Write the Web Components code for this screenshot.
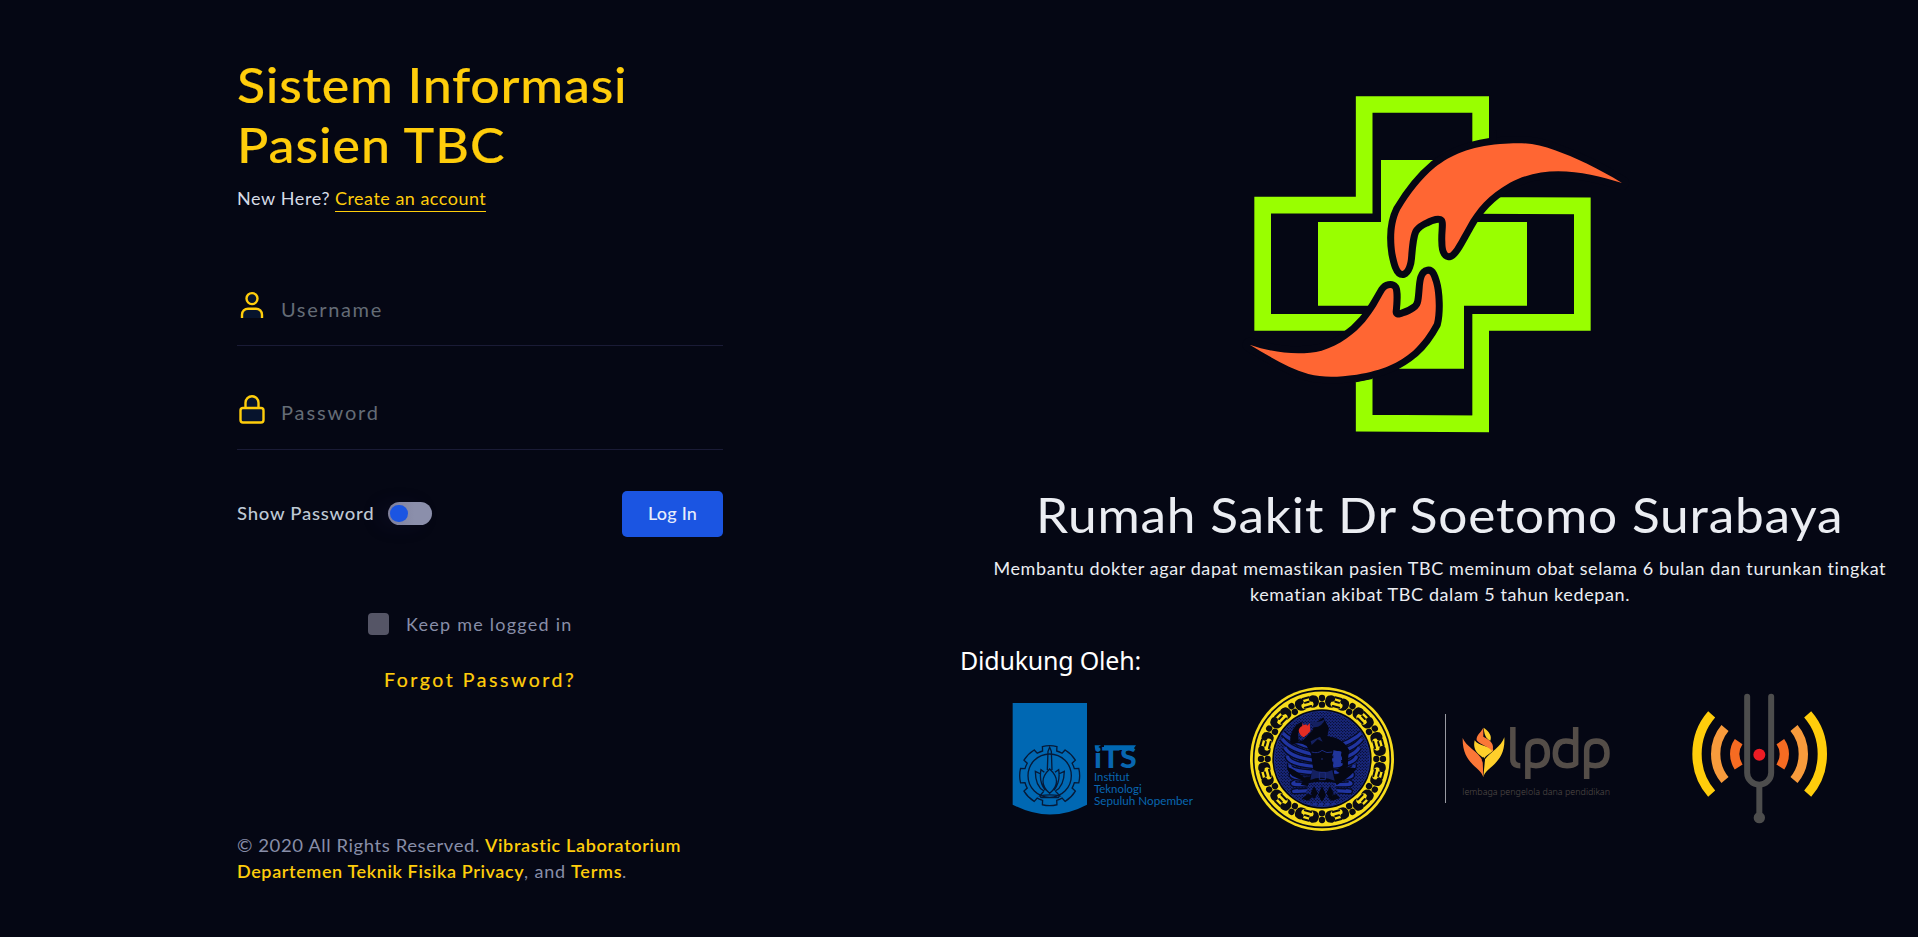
<!DOCTYPE html>
<html lang="id"><head><meta charset="utf-8"><title>Sistem Informasi Pasien TBC</title>
<style>html,body{margin:0;height:100%;background:#050714;overflow:hidden}</style></head>
<body><login-page></login-page>
<script>
const define=(name,html,after)=>customElements.define(name,class extends HTMLElement{
  connectedCallback(){
    if(!this.shadowRoot){
      const t=document.createElement('template');
      t.innerHTML=typeof html==='function'?html(this):html;
      this.attachShadow({mode:'open'}).append(t.content.cloneNode(true));
    }
    if(after)after(this);
  }});

/* A run of text set to the width in its "w" attribute: glyphs are widened by "x", the rest is tracking. */
define('tracked-text','<style>:host{display:inline-block;white-space:pre}span{display:inline-block;transform-origin:0 50%}</style><span><slot></slot></span>',el=>{
  const s=el.shadowRoot.querySelector('span'),n=el.textContent.length,w=+el.getAttribute('w'),x=+(el.getAttribute('x')||1);
  s.style.letterSpacing='0px';
  const d=(w/x-s.getBoundingClientRect().width)/(n-.5);
  s.style.letterSpacing=d.toFixed(4)+'px';
  if(x!==1)s.style.transform=`scaleX(${x})`;
  el.style.width=w+'px';
});

define('field-row',el=>{const lock=el.hasAttribute('lock');return `<style>
:host{display:block;height:103px}
.row{display:flex;height:${lock?'103px':'102px'};border-bottom:1px solid #1a1b36;box-sizing:content-box}
svg{margin:${lock?'46px':'47px'} 14px 0 0;width:30px;height:34px;flex:none}
.ph{margin-top:51px;font-size:20px;line-height:30px;height:30px;color:#646c76;font-weight:400}
</style><div class="row">${lock
?'<svg viewBox="0 0 30 34" fill="#07142d" stroke="#ffcd0b" stroke-width="2.4"><path d="M8.500 17V10.700a6.500 6.500 0 0 1 13 0V17"/><rect x="3.500" y="16" width="23" height="14.500" rx="2.500"/></svg>'
:'<svg viewBox="0 0 30 34" fill="#07142d" stroke="#ffcd0b" stroke-width="2.4"><circle cx="15" cy="8.600" r="5.500"/><path d="M5 28V24.700a6 6 0 0 1 6-6h8a6 6 0 0 1 6 6V28"/></svg>'}
<div class="ph"><slot></slot></div></div>`});

define('toggle-switch',`<style>:host{display:block;width:44px;height:23px;border-radius:12px;background:linear-gradient(90deg,#7f7f9b,#8b8fab 60%);box-shadow:-10px 2px 18px rgba(40,34,80,.16);padding:3px 2px;box-sizing:border-box}
i{display:block;width:18px;height:17px;border-radius:9px;background:#1b55e2}</style><i></i>`);

define('hospital-logo',`<style>:host{display:block;width:400px;height:370px}svg{display:block}</style>
<svg width="400" height="370" viewBox="0 0 1200 1110">
<path fill="none" stroke="#9f0" stroke-width="50" d="M372.500 375.500V73.500H722V376.500L1027 377.500V727H722V1031.500L372.500 1029.500V727H68V375.500Z"/>
<path fill="#9f0" d="M423 240H672V426H861V677H672V866H423V677H234V426H423Z"/>
<g fill="#f63" stroke="#050714" stroke-width="42" stroke-linejoin="round">
<path d="M1146 309C1080 268 1000 230 945 211C890 190 850 186 780 192C690 199 632 225 585 262C545 295 510 340 480 390C460 430 460 480 466 520C472 550 479 573 488 573C497 570 503 549 504 535C507 500 509 470 518 450C528 434 542 426 555 420C577 408 600 402 612 414C623 425 614 455 616 485C616 504 619 518 627 520C640 516 657 480 680 440C710 385 745 345 810 308C920 250 1040 277 1146 309Z"/>
<path d="M29 794C90 830 145 865 205 882C250 893 290 892 350 884C430 870 475 850 520 812C545 790 566 760 582 730C590 700 589 640 579 607C574 590 570 580 564 581C553 583 550 600 548 625C545 660 545 675 532 687C510 704 496 707 481 712C470 715 458 708 458 695C461 670 462 635 458 627C454 622 442 622 434 634C415 665 405 690 375 725C345 760 300 795 245 812C180 828 100 819 29 794Z"/></g>
<path fill="#050714" d="M697 187L747 177L770 150V215H697ZM397 897L348 907V880L397 874Z"/>
<g fill="#f63">
<path d="M1146 309C1080 268 1000 230 945 211C890 190 850 186 780 192C690 199 632 225 585 262C545 295 510 340 480 390C460 430 460 480 466 520C472 550 479 573 488 573C497 570 503 549 504 535C507 500 509 470 518 450C528 434 542 426 555 420C577 408 600 402 612 414C623 425 614 455 616 485C616 504 619 518 627 520C640 516 657 480 680 440C710 385 745 345 810 308C920 250 1040 277 1146 309Z"/>
<path d="M29 794C90 830 145 865 205 882C250 893 290 892 350 884C430 870 475 850 520 812C545 790 566 760 582 730C590 700 589 640 579 607C574 590 570 580 564 581C553 583 550 600 548 625C545 660 545 675 532 687C510 704 496 707 481 712C470 715 458 708 458 695C461 670 462 635 458 627C454 622 442 622 434 634C415 665 405 690 375 725C345 760 300 795 245 812C180 828 100 819 29 794Z"/></g>
</svg>`);

define('its-logo',()=>{
  let g='';
  for(let i=0;i<8;i++){
    const p=(r,a)=>{a=(a+i*45-90)*Math.PI/180;return (299+r*Math.cos(a)).toFixed(1)+' '+(437+r*Math.sin(a)).toFixed(1)};
    g+=(i?'L':'M')+p(77,-16)+'L'+p(90,-14)+'A90 90 0 0 1 '+p(90,14)+'L'+p(77,16)+'A77 77 0 0 1 '+p(77,29);
  }
  return `<style>:host{display:block;width:260px;height:160px}svg{display:block}text{font-family:Lato,sans-serif;fill:#0866b0}</style>
<svg width="260" height="160" viewBox="0 150 780 480"><path fill="#0068b3" d="M188 219H411V524Q300 583 188 524Z"/>
<g fill="none" stroke="#061a38" stroke-width="4"><path d="${g}Z"/><circle cx="299" cy="437" r="65"/>
<path d="M292 420L294 364L299 352L304 364L306 420M299 417Q259 455 299 490Q340 455 299 417ZM283 427L273 419Q266 455 286 481M315 427L326 419Q332 455 312 481M272 432L256 424Q256 470 282 483M326 432L343 424Q342 470 316 483M282 483L270 497Q300 492 329 497L316 483M270 497L273 503H325L329 497"/></g>
<text x="432" y="413" font-size="88" font-weight="900" textLength="128" lengthAdjust="spacingAndGlyphs">iTS</text>
<path d="M434 346H453L435 358ZM462 346H558L548 360H462Z" fill="#0068b3"/>
<text x="432" y="454" font-size="32" textLength="107" lengthAdjust="spacingAndGlyphs">Institut</text>
<text x="432" y="490" font-size="32" textLength="143" lengthAdjust="spacingAndGlyphs">Teknologi</text>
<text x="432" y="525" font-size="32" textLength="297" lengthAdjust="spacingAndGlyphs">Sepuluh Nopember</text></svg>`});

define('unair-seal',()=>{
  let b='',rays='';
  for(let i=0;i<12;i++){
    b+=`<g transform="rotate(${i*30} 246 237)"><circle cx="246" cy="54" r="9.500"/><circle cx="246" cy="74" r="9.500"/>
<path d="M228 47Q210 42 207 54Q205 66 218 65Q226 76 212 83Q236 84 237 65Q236 52 228 47ZM264 47Q282 42 285 54Q287 66 274 65Q266 76 280 83Q256 84 255 65Q256 52 264 47Z"/>
<g transform="rotate(15 246 237)"><path d="M236 48H256M240 61H252M236 75H256" stroke="#0b0c14" stroke-width="6" stroke-linecap="round"/></g></g>`;
  }
  for(let i=0;i<8;i++){
    const y=150+i*21;
    rays+=`<path d="M${225-i} ${y+55-i*3}Q${155-i*3} ${y+40} ${118+i*8} ${y+i*5}M${270+i} ${y+55-i*3}Q${335+i*3} ${y+40} ${374-i*8} ${y+i*5}"/>`;
  }
  return `<style>:host{display:block;width:160px;height:160px}svg{display:block}</style>
<svg width="160" height="160" viewBox="0 0 480 480"><defs><pattern id="d" width="9" height="9" patternUnits="userSpaceOnUse"><rect width="9" height="9" fill="#18277c"/><path d="M0 2h4M5 7h4" stroke="#070c2c" stroke-width="3"/></pattern><clipPath id="c"><circle cx="246" cy="237" r="141"/></clipPath></defs>
<circle cx="246" cy="237" r="216" fill="#f7dc1c"/><circle cx="246" cy="237" r="205" fill="none" stroke="#080b17" stroke-width="5"/>
<g fill="#0b0c14">${b}</g><circle cx="246" cy="237" r="149" fill="#050714"/><circle cx="246" cy="237" r="142" fill="url(#d)"/>
<circle cx="246" cy="237" r="143" fill="none" stroke="#1c2f8e" stroke-width="3"/>
<g clip-path="url(#c)"><g fill="none" stroke="#060a24" stroke-width="18">${rays}</g><g fill="none" stroke="#2034a0" stroke-width="10">${rays}</g>
<path fill="#050714" d="M187 126Q164 130 154 160Q145 190 159 193Q180 185 200 198L213 222L220 270L210 290L192 292Q160 265 143 262Q138 270 157 288L190 303L182 314L205 319Q215 300 230 320L185 356L205 362L240 330L275 362L300 355L260 310Q285 300 290 316L305 305Q330 292 348 268Q350 260 315 263Q300 280 284 288L275 230L283 210L304 215L308 255L288 272L300 280L324 258Q323 230 328 211Q315 185 288 174L262 168L267 145L250 112L225 130L218 150L190 180L176 185L174 160L187 145Z"/>
<path fill="#142060" d="M210 123Q245 130 257 114Q246 143 222 142ZM212 184L240 170L248 185L233 178L215 195ZM217 267Q245 285 277 270L284 302Q245 285 211 300Z"/>
<path fill="#20359b" d="M280 211L303 215V255L280 258Z"/>
<path d="M215 216Q235 222 246 211Q260 222 277 216M246 234V240M238 277H256V299H238Z" fill="none" stroke="#1c2b7c" stroke-width="3"/>
<path d="M206 310Q235 300 284 310L295 340L265 350L230 350L198 340Z" fill="url(#d)"/><path fill="#050714" d="M222 318L234 340L222 358L212 340ZM246 318L258 345L246 365L234 345ZM270 318L281 340L270 358L259 340Z"/><path d="M180 373H316" stroke="#1c2f8e" stroke-width="9" stroke-dasharray="12 7"/></g>
<path fill="#e42d24" d="M187 129L191 136L198 133L202 137L209 129L211 153Q203 164 191 172Q179 166 176 153Q177 142 187 138Z"/></svg>`});

define('lpdp-logo',`<style>:host{display:block;width:200px;height:120px}svg{display:block}text{font-family:"Noto Sans",sans-serif;fill:#544d48}</style>
<svg width="200" height="120" viewBox="0 0 600 360"><path d="M46.500 42V309" stroke="#999aa2" stroke-width="3"/>
<g fill="none" stroke="#544d48" stroke-width="16.500"><path d="M248.500 81V178Q249 197 271 197"/><path d="M293.500 237V150Q294 123 322 123Q352 124 352 160Q352 197 318 197Q304 197 294 191"/><path d="M437 81V190Q429 197 411 197Q376 197 376 160Q377 123 408 123Q427 123 437 132"/><path d="M470 237V150Q471 123 499 123Q531 124 531 160Q531 197 496 197Q480 197 470 191"/></g>
<path fill="#fb7737" d="M98 114C108 140 145 155 158 182L160 232C152 200 96 192 98 114Z"/>
<path fill="#ffd02b" d="M223 112C214 140 180 158 165 178L160 232C166 200 228 192 223 112Z"/>
<path fill="#ffd02b" d="M134 121C145 138 184 140 190 150C184 160 168 165 162 176C154 166 126 158 134 121Z"/>
<path fill="#fb7737" d="M160 83C152 98 138 106 140 121C152 137 180 140 187 155C194 132 184 122 160 110Z"/>
<path fill="#ffd02b" d="M161 83C178 94 186 108 181 122C173 118 163 112 161 83Z"/><path fill="#050714" d="M160 170L165 180L160 190L155 180Z"/>
<text x="97" y="286" font-size="28" font-weight="300" textLength="443" lengthAdjust="spacingAndGlyphs">lembaga pengelola dana pendidikan</text></svg>`);

define('vibrastic-logo',`<style>:host{display:block;width:160px;height:160px}svg{display:block}</style>
<svg width="160" height="160" viewBox="0 0 480 480" fill="none"><path d="M201.500 50V278A36 36 0 0 0 273.500 278V50" stroke="#4d4d4d" stroke-width="18" stroke-linecap="round"/><path d="M238 315V405" stroke="#4d4d4d" stroke-width="18"/><circle cx="238" cy="413" r="17" fill="#4d4d4d"/><circle cx="238" cy="224" r="18" fill="#ed1c24"/>
<g stroke-width="28"><g stroke="#ffcd0b"><path d="M95 103Q51 153 51 222T95 341"/><path d="M383 103Q427 153 427 222T383 341"/></g>
<g stroke="#f89b3c"><path d="M135 144Q107 177 107 222T135 300"/><path d="M342 144Q370 177 370 222T342 300"/></g>
<g stroke="#f66b22"><path d="M176 185Q164 202 164 222T176 261"/><path d="M301 185Q313 202 313 222T301 261"/></g></g></svg>`);

define('sign-in-form',`<style>
:host{display:block;width:486px;padding:54px 0 0 237px;color:#d6dbe6}
h1{margin:0;font-size:48.500px;line-height:60px;font-weight:500;color:#ffcd0b;display:flex;flex-direction:column;-webkit-text-stroke:.15px #ffcd0b}
.new{display:flex;height:28px;line-height:28px;font-size:18px;margin-top:10px;margin-bottom:31px}
.link{color:#ffcd0b}.u{border-bottom:1px solid #ffcd0b;height:27px}
.act{display:flex;align-items:center;height:46px;margin-top:42px;font-size:18px}
.show{color:#bfc9d4;font-weight:500;margin-top:-2px}toggle-switch{margin:-2px 0 0 15px}
button{margin:0 0 0 auto;width:101px;height:46px;border:0;border-radius:5px;background:#1b55e2;color:#e8edfb;font:500 18px Lato,sans-serif;padding:0 0 2px}
.keep{display:flex;align-items:center;height:26px;line-height:26px;margin:74px 0 0 131px;font-size:18px;color:#888ea8}
.keep i{width:21px;height:22px;border-radius:4px;background:#555566;margin-right:17px}
.forgot{height:30px;line-height:30px;margin:28px 0 0 147px;font-size:19.500px;-webkit-text-stroke:.2px}
footer{margin-top:137px;font-size:18px;line-height:26px;color:#888ea8}
footer div{display:flex;height:26px}footer .link{font-weight:600}
</style>
<h1><tracked-text w="390" x="1.07">Sistem Informasi</tracked-text><tracked-text w="268" x="1.07">Pasien TBC</tracked-text></h1>
<div class="new"><tracked-text w="98">New Here? </tracked-text><tracked-text class="link u" w="151">Create an account</tracked-text></div>
<field-row><tracked-text w="101">Username</tracked-text></field-row>
<field-row lock><tracked-text w="98">Password</tracked-text></field-row>
<div class="act"><tracked-text class="show" w="137" x="1.03">Show Password</tracked-text><toggle-switch style="margin-left:14px"></toggle-switch><button><tracked-text w="49">Log In</tracked-text></button></div>
<div class="keep"><i></i><tracked-text w="166">Keep me logged in</tracked-text></div>
<div class="forgot link"><tracked-text w="191">Forgot Password?</tracked-text></div>
<footer><div><tracked-text w="248" x="1.03">© 2020 All Rights Reserved. </tracked-text><tracked-text class="link" w="196">Vibrastic Laboratorium</tracked-text></div>
<div><tracked-text class="link" w="287">Departemen Teknik Fisika Privacy</tracked-text><tracked-text w="47">, and </tracked-text><tracked-text class="link" w="51">Terms</tracked-text>.</div></footer>`);

define('hospital-panel',`<style>
:host{display:block;width:958px;color:#ebedf2}
hospital-logo{margin:80px 0 0 280px}
h2{margin:34px 0 0 76px;font-size:48.500px;line-height:60px;font-weight:400;height:60px;color:#ebedf2}
p{margin:11px 0 0;font-size:18px;line-height:26px;width:960px;display:flex;flex-direction:column;align-items:center;font-weight:400}
h3{margin:33px 0 0;font:400 25px/40px "Noto Sans",sans-serif;color:#fff;height:40px}
.logos{display:grid;grid-template-columns:290px 190px 250px 160px;margin-left:-10px;height:160px}
lpdp-logo{margin-top:20px}
</style>
<hospital-logo></hospital-logo><h2><tracked-text w="807" x="1.06">Rumah Sakit Dr Soetomo Surabaya</tracked-text></h2>
<p><tracked-text w="893">Membantu dokter agar dapat memastikan pasien TBC meminum obat selama 6 bulan dan turunkan tingkat</tracked-text><tracked-text w="380">kematian akibat TBC dalam 5 tahun kedepan.</tracked-text></p>
<h3><tracked-text w="181">Didukung Oleh:</tracked-text></h3>
<div class="logos"><its-logo></its-logo><unair-seal></unair-seal><lpdp-logo></lpdp-logo><vibrastic-logo></vibrastic-logo></div>`);

define('login-page',`<style>:host{display:flex;height:937px;overflow:hidden;background:#050714;font-family:Lato,"Noto Sans",sans-serif}
sign-in-form{flex:none}hospital-panel{flex:none;margin-left:237px}</style><sign-in-form></sign-in-form><hospital-panel></hospital-panel>`);
</script></body></html>
